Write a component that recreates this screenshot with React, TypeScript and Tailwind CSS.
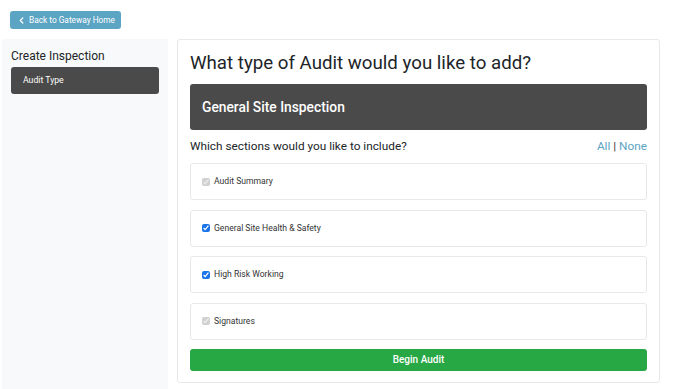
import React, { useState } from 'react';

type Section = {
  id: string;
  label: string;
  locked: boolean;
};

const sections: Section[] = [
  { id: 'summary', label: 'Audit Summary', locked: true },
  { id: 'health', label: 'General Site Health & Safety', locked: false },
  { id: 'risk', label: 'High Risk Working', locked: false },
  { id: 'signatures', label: 'Signatures', locked: true },
];

const App: React.FC = () => {
  const [checked, setChecked] = useState<Record<string, boolean>>({
    summary: true,
    health: true,
    risk: true,
    signatures: true,
  });

  const setAll = (value: boolean) => {
    const next: Record<string, boolean> = {};
    sections.forEach((s) => {
      next[s.id] = s.locked ? true : value;
    });
    setChecked(next);
  };

  return (
    <div className="w-[688px] h-[389px] overflow-hidden bg-white text-[#212529]" style={{ fontFamily: 'Roboto, "Liberation Sans", sans-serif' }}>
      <div className="pl-[10px] pt-[11px]">
        <button className="flex items-center gap-[5px] h-[18px] pl-[9px] pr-[6px] rounded-[3px] bg-[#5ba4c3] text-white text-[8.3px]">
          <svg width="5" height="7" viewBox="0 0 5 7" fill="none">
            <path d="M3.8 1 L1.3 3.5 L3.8 6" stroke="white" strokeWidth="1.3" strokeLinecap="round" strokeLinejoin="round" />
          </svg>
          Back to Gateway Home
        </button>
      </div>

      <div className="flex pl-[2px] pt-[10px] gap-[9px]">
        {/* sidebar */}
        <div className="w-[166px] h-[360px] bg-[#f8f9fa] px-[9px] pt-[9px]">
          <h2 className="text-[12px] leading-[16px] mb-[3px]">Create Inspection</h2>
          <div className="h-[27px] flex items-center px-[12px] rounded-[3px] bg-[#4a4a4a] text-white text-[8.7px]">
            Audit Type
          </div>
        </div>

        {/* main card */}
        <div className="w-[483px] h-[344px] border border-[#e6e8ea] rounded-[3px] px-[12px] pt-[11px]">
          <h1 className="text-[18.7px] leading-[24px] mb-[9px]">What type of Audit would you like to add?</h1>
          <div className="h-[46px] flex items-center px-[12px] rounded-[3px] bg-[#4a4a4a] text-white text-[13.8px] font-medium">
            General Site Inspection
          </div>

          <div className="flex items-center justify-between mt-[8px] h-[18px] text-[11.8px]">
            <span>Which sections would you like to include?</span>
            <span>
              <button className="text-[#5ba4c3]" onClick={() => setAll(true)}>All</button>
              <span className="text-[#333]"> | </span>
              <button className="text-[#5ba4c3]" onClick={() => setAll(false)}>None</button>
            </span>
          </div>

          <div className="flex flex-col gap-[9.5px] mt-[7px]">
            {sections.map((s) => (
              <label
                key={s.id}
                className="h-[37px] flex items-center gap-[4px] pl-[11px] border border-[#e6e8ea] rounded-[3px] text-[8.6px] text-[#333]"
              >
                <input
                  type="checkbox"
                  className={`w-[8px] h-[8px] m-0 ${s.locked ? 'accent-[#c8c8c8]' : 'accent-[#1a73e8]'}`}
                  checked={checked[s.id]}
                  disabled={s.locked}
                  onChange={(e) => setChecked({ ...checked, [s.id]: e.target.checked })}
                />
                {s.label}
              </label>
            ))}
          </div>

          <button className="mt-[9px] w-full h-[22px] rounded-[3px] bg-[#28a745] text-white text-[10px] font-medium">
            Begin Audit
          </button>
        </div>
      </div>
    </div>
  );
};

export default App;
